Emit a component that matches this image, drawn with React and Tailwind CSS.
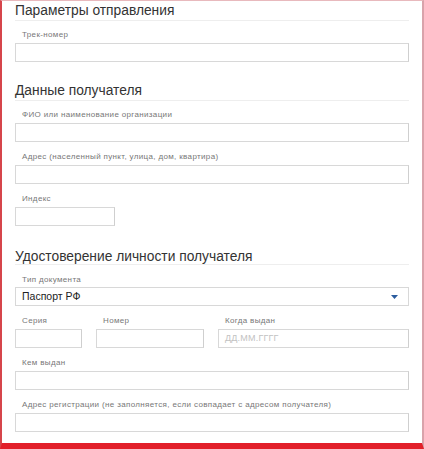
import React from "react";

function Label({ children, className = "" }) {
  return (
    <div className={`h-[10px] pl-[7px] text-[8px] leading-[10px] tracking-[0.35px] text-[#777] whitespace-nowrap ${className}`}>
      {children}
    </div>
  );
}

function Input({ className = "", placeholder }) {
  return (
    <div className={`mt-[3px] h-[19px] border border-[#d8d8d8] border-r-[#cfcfcf] bg-white flex items-center pl-[6px] ${className}`}>
      {placeholder && <span className="text-[9px] text-[#c2c2c2] tracking-[0.2px]">{placeholder}</span>}
    </div>
  );
}

function Heading({ children, className = "" }) {
  return (
    <div className={`h-[20px] border-b border-[#eeeeee] text-[13.8px] leading-[19px] text-[#333] whitespace-nowrap ${className}`}>
      {children}
    </div>
  );
}

export default function App() {
  return (
    <div
      className="w-[424px] h-[449px] bg-white border-l-2 border-l-[#d6454b] border-r-2 border-r-[#d9a3ab] border-t border-t-[#e8b9bd] border-b-[6px] border-b-[#e2202a] px-[13px] flex flex-col"
      style={{ fontFamily: '"Liberation Sans", Arial, sans-serif' }}
    >
      <Heading>Параметры отправления</Heading>
      <Label className="mt-[9px]">Трек-номер</Label>
      <Input />

      <Heading className="mt-[19px]">Данные получателя</Heading>
      <Label className="mt-[9px]">ФИО или наименование организации</Label>
      <Input />
      <Label className="mt-[10px]">Адрес (населенный пункт, улица, дом, квартира)</Label>
      <Input />
      <Label className="mt-[10px]">Индекс</Label>
      <Input className="w-[100px]" />

      <Heading className="mt-[19px] pt-[2px]">Удостоверение личности получателя</Heading>
      <Label className="mt-[10px]">Тип документа</Label>
      <div className="mt-[2px] h-[19px] border border-[#d8d8d8] flex items-center justify-between pl-[6px] pr-[10px]">
        <span className="text-[10.5px] text-[#222]">Паспорт РФ</span>
        <svg width="7" height="4" viewBox="0 0 7 4">
          <polygon points="0,0 7,0 3.5,4" fill="#2b5c9e" />
        </svg>
      </div>

      <div className="mt-[10px] flex gap-[14px]">
        <div className="w-[67px]">
          <Label>Серия</Label>
          <Input />
        </div>
        <div className="w-[108px]">
          <Label>Номер</Label>
          <Input />
        </div>
        <div className="flex-1">
          <Label>Когда выдан</Label>
          <Input placeholder="ДД.ММ.ГГГГ" />
        </div>
      </div>

      <Label className="mt-[10px]">Кем выдан</Label>
      <Input />
      <Label className="mt-[10px]">Адрес регистрации (не заполняется, если совпадает с адресом получателя)</Label>
      <Input />
    </div>
  );
}
